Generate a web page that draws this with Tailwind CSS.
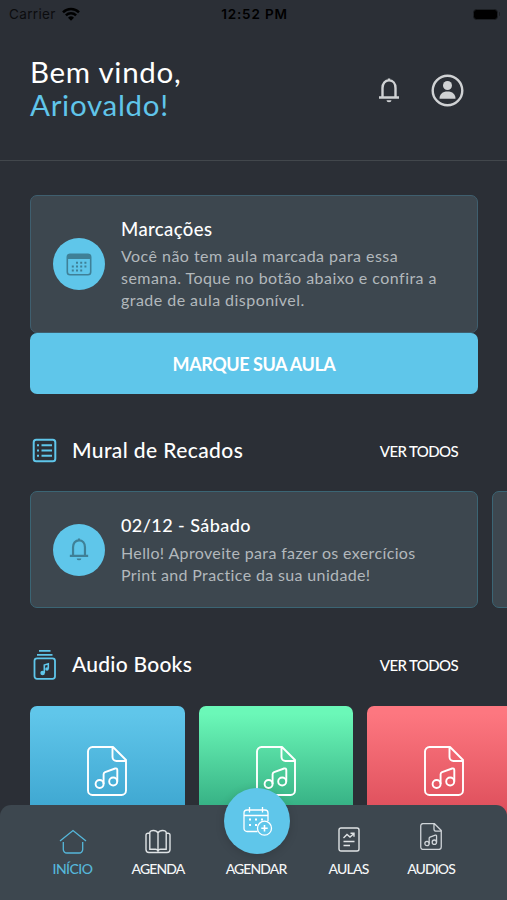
<!DOCTYPE html>
<html lang="pt-BR">
<head>
<meta charset="utf-8">
<title>Início</title>
<script src="https://cdn.jsdelivr.net/npm/@tailwindcss/browser@4"></script>
</head>
<body class="bg-[#2b2f36]">
<svg class="hidden">
  <symbol id="bell" viewBox="0 0 24 28"><path d="M5.500 20.300V11c0-4.600 2.600-7.600 6.500-7.600s6.500 3 6.500 7.600v9.300M2 20.500h20M12 1.500V4" fill="none" stroke="currentColor" stroke-width="2.400"/><path d="M9.500 23.200h5a2.500 2 0 0 1-5 0z" fill="currentColor"/></symbol>
  <symbol id="audiofile" viewBox="0 0 40 50"><g fill="none" stroke="currentColor" stroke-linejoin="round"><path d="M5.500 1H26L39 14v30.500a4.500 4.500 0 0 1-4.500 4.500h-29A4.500 4.500 0 0 1 1 44.500v-39A4.500 4.500 0 0 1 5.500 1zM25.500 1v10a4 4 0 0 0 4 4H39"/><circle cx="12.600" cy="38" r="4"/><circle cx="26.200" cy="35.500" r="4"/><path d="M16.600 38V28.300c0-1 .5-1.600 1.500-2.100l10-3.700c1.300-.4 2.200.2 2.200 1.500v11.500"/></g></symbol>
</svg>
<div class="relative flex h-[900px] w-[507px] flex-col overflow-hidden bg-[#2b2f36] font-['Lato','Noto_Sans',sans-serif] text-white">
  <div class="grid h-[28px] shrink-0 grid-cols-3 items-center pr-[7px] pl-[9px] font-['Inter',sans-serif] text-[13.500px] text-black">
    <div class="flex items-center gap-[6px]"><span class="tracking-[0.350px] text-[#0b0c0e]">Carrier</span>
      <svg class="h-[14px] w-[18px]" viewBox="0 0 18 14"><g fill="none" stroke="#000" stroke-width="2.500"><path d="M1 5.300a11.400 11.400 0 0 1 16 0M3.900 8.400a7.300 7.300 0 0 1 10.200 0"/></g><path d="M6 10.700a4.300 4.300 0 0 1 6 0L9 13.700z"/></svg></div>
    <div class="text-center font-semibold tracking-[0.850px] whitespace-nowrap">12:52 PM</div>
    <div class="flex items-center justify-end gap-[1px]"><span class="h-[11px] w-[25px] rounded-[3.500px] border border-[#1c1f23] bg-black"></span><span class="h-[4px] w-[1.500px] rounded-r bg-[#1c1f23]"></span></div>
  </div>
  <header class="flex h-[133px] shrink-0 items-start justify-between border-b border-[#42474c] pt-[27px] pr-[43px] pl-[30px]">
    <h1 class="text-[29.500px] leading-[33px] tracking-[0.720px]">Bem vindo,<br><span class="text-[#60c5ea]">Ariovaldo!</span></h1>
    <div class="flex items-center gap-[30px] pt-[19px] text-[#d0d2d4]">
      <svg class="h-[28px] w-[24px]"><use href="#bell"/></svg>
      <svg class="h-[33px] w-[33px]" viewBox="0 0 33 33"><circle cx="16.500" cy="16.500" r="14.800" fill="none" stroke="currentColor" stroke-width="2.400"/><circle cx="16.500" cy="11.500" r="4.500" fill="currentColor"/><path d="M8.500 24.800c0-4.600 3-7.200 8-7.200s8 2.600 8 7.200z" fill="currentColor"/></svg>
    </div>
  </header>
  <main class="flex flex-col">
    <section class="mx-[30px] mt-[34px] flex w-[448px] flex-col">
      <div class="flex h-[138px] items-center rounded-[7px] border border-[#3f5f6f] bg-[#3d474f] pl-[22px]">
        <div class="flex size-[52px] shrink-0 items-center justify-center rounded-full bg-[#5fc6ea] text-[#3f8097]">
          <svg class="h-[23px] w-[26px]" viewBox="0 0 26 23"><rect x="1.300" y="1.300" width="23.400" height="20.400" rx="2.800" fill="none" stroke="currentColor" stroke-width="1.600"/><path d="M1 6V4a3 3 0 0 1 3-3h18a3 3 0 0 1 3 3v2z" fill="currentColor"/><path d="M10 9.700h10.400M5.800 13.600h14.600M5.800 17.500h10.400" stroke="currentColor" stroke-width="2" stroke-dasharray="2 2.200"/></svg>
        </div>
        <div class="ml-[16px]">
          <h2 class="text-[18.500px] leading-[24px] font-medium tracking-[0.400px]">Marcações</h2>
          <p class="mt-[4px] text-[16px] leading-[22px] tracking-[0.460px] whitespace-nowrap text-[#b2b8bc]">Você não tem aula marcada para essa<br>semana. Toque no botão abaixo e confira a<br>grade de aula disponível.</p>
        </div>
      </div>
      <button class="h-[61px] rounded-[7px] bg-[#5fc6ea] pt-px text-[18px] font-bold tracking-[-0.450px]">MARQUE SUA AULA</button>
    </section>
    <div class="mt-[36px] flex h-[40px] items-center pr-[49px] pl-[32px]">
      <svg class="h-[25px] w-[25px] text-[#5fc6ea]" viewBox="0 0 25 25"><rect x="1.700" y="1.700" width="21.600" height="21.600" rx="2.500" fill="none" stroke="currentColor" stroke-width="2"/><path d="M5 7.300h2M5 12.500h2M5 17.700h2M9.500 7.300H20M9.500 12.500H20M9.500 17.700H20" stroke="currentColor" stroke-width="2"/></svg>
      <h2 class="-mt-px ml-[15px] text-[21px] font-medium tracking-[0.400px]">Mural de Recados</h2>
      <a class="mt-[2px] ml-auto text-[15px] font-medium tracking-[-0.620px]">VER TODOS</a>
    </div>
    <div class="mt-[21px] ml-[30px] flex gap-[14px]">
      <article class="flex h-[117px] w-[448px] shrink-0 items-center rounded-[7px] border border-[#3b6574] bg-[#3d474f] pl-[22px]">
        <div class="flex size-[52px] shrink-0 items-center justify-center rounded-full bg-[#5fc6ea] text-[#3f8097]"><svg class="mt-px h-[26px] w-[22px]"><use href="#bell"/></svg></div>
        <div class="ml-[16px]">
          <h3 class="-mt-px text-[18px] leading-[24px] font-medium tracking-[0.430px]">02/12 - Sábado</h3>
          <p class="mt-[5px] text-[16px] leading-[22px] tracking-[0.360px] whitespace-nowrap text-[#b2b8bc]">Hello! Aproveite para fazer os exercícios<br>Print and Practice da sua unidade!</p>
        </div>
      </article>
      <article class="h-[117px] w-[448px] shrink-0 rounded-[7px] border border-[#3b6574] bg-[#3d474f]"></article>
    </div>
    <div class="mt-[36px] flex h-[40px] items-center pr-[49px] pl-[32px]">
      <svg class="h-[31px] w-[25px] text-[#5fc6ea]" viewBox="0 0 25 31"><path d="M7 1.800h11.500M5 5.800h15.500" stroke="currentColor" stroke-width="1.800"/><rect x="2.500" y="9.300" width="20.500" height="20.500" rx="2.500" fill="none" stroke="currentColor" stroke-width="1.800"/><circle cx="10.600" cy="24" r="2.300" fill="currentColor"/><circle cx="15" cy="20" r="1.800" fill="currentColor"/><path d="M12.300 24v-8l4-1.200v5" fill="none" stroke="currentColor" stroke-width="1.600"/></svg>
      <h2 class="-mt-px ml-[15px] text-[21px] font-medium tracking-[0.250px]">Audio Books</h2>
      <a class="mt-[2px] ml-auto text-[15px] font-medium tracking-[-0.620px]">VER TODOS</a>
    </div>
    <div class="mt-[22px] ml-[30px] flex gap-[14px]">
      <div class="flex h-[154px] w-[154.500px] shrink-0 justify-center rounded-[7px] bg-linear-to-b from-[#60c6ea] from-[5%] to-[#2a97c4] pt-[40px]"><svg class="h-[50px] w-[40px]" stroke-width="1.900"><use href="#audiofile"/></svg></div>
      <div class="flex h-[154px] w-[154.500px] shrink-0 justify-center rounded-[7px] bg-linear-to-b from-[#6bf8b8] from-[5%] to-[#128b69] pt-[40px]"><svg class="h-[50px] w-[40px]" stroke-width="1.900"><use href="#audiofile"/></svg></div>
      <div class="flex h-[154px] w-[154.500px] shrink-0 justify-center rounded-[7px] bg-linear-to-b from-[#fd7780] from-[5%] to-[#cf3a4b] pt-[40px]"><svg class="h-[50px] w-[40px]" stroke-width="1.900"><use href="#audiofile"/></svg></div>
    </div>
  </main>
  <nav class="absolute inset-x-0 bottom-0 flex h-[95px] rounded-t-[11px] bg-[#3d474f] pl-[30px] text-[14px] leading-[18px] font-medium tracking-[-0.900px] text-[#f4f6f7]">
    <a class="flex w-[85px] flex-col items-center tracking-[-0.550px] text-[#56b7da]"><span class="flex h-[55px] items-end pb-[6px]"><svg class="h-[25px] w-[28px]" viewBox="0 0 28 25" fill="none" stroke="currentColor" stroke-width="1.300"><path d="M1 12 14 1.500 27 12M4.300 13v7.500a3.500 3.500 0 0 0 3.500 3.500h12.400a3.500 3.500 0 0 0 3.500-3.500V13"/></svg></span>INÍCIO</a>
    <a class="flex w-[86px] flex-col items-center"><span class="flex h-[55px] items-end pb-[6px]"><svg class="h-[25px] w-[26px] text-[#dfe3e5]" viewBox="0 0 26 25" fill="none" stroke="currentColor" stroke-width="1.400"><path d="M13 4c-1-1.800-2.500-2.500-4.500-2.500S5 2.200 4.800 3.500v16.700h5.700c1.200 0 2 .6 2.500 1.800.5-1.200 1.300-1.800 2.500-1.800h5.700V3.500C21 2.200 19.500 1.500 17.500 1.500S14 2.200 13 4zM13 4v18M4.800 4C2 4 1 4.500 1 6v14.500C1 22.500 2 23.500 4 23.500h18c2 0 3-1 3-3V6c0-1.500-1-2-3.800-2"/></svg></span>AGENDA</a>
    <a class="flex w-[110px] flex-col items-center pt-[55px]">AGENDAR</a>
    <a class="flex w-[75px] flex-col items-center tracking-[-0.800px]"><span class="flex h-[55px] items-end pb-[8px]"><svg class="h-[25px] w-[22px] text-[#dfe3e5]" viewBox="0 0 22 25" fill="none" stroke="currentColor" stroke-width="1.400"><rect x="1" y="1" width="20" height="23" rx="2"/><path d="M5.500 11 9 7.500l3 2.500 4-3.500M12.500 6.200H16v3.500M5.500 14.500h11M5.500 18.500h6.500"/></svg></span>AULAS</a>
    <a class="flex w-[90px] flex-col items-center"><span class="flex h-[55px] items-end pb-[10px]"><svg class="h-[27px] w-[22px] text-[#cfd4d8]" stroke-width="2.400"><use href="#audiofile"/></svg></span>AUDIOS</a>
  </nav>
  <div class="absolute top-[788px] left-[224px] flex size-[66px] items-center justify-center rounded-full bg-[#5fc6ea] pl-[2px] shadow-[0_2px_10px_rgba(0,0,0,0.150)]">
    <svg class="h-[31px] w-[30px]" viewBox="0 0 30 31" fill="none" stroke="#fff" stroke-width="1.300"><path d="M14.500 25.500H4a3 3 0 0 1-3-3V7a3 3 0 0 1 3-3h18a3 3 0 0 1 3 3v8M1 9.500h24M6.500 1v5.500M19.500 1v5.500"/><path d="M6 13.500h2M12 13.500h2M18 13.500h2M6 19h2M12 19h2" stroke-width="2"/><circle cx="21.500" cy="22.200" r="7"/><path d="M21.500 19v6.400M18.300 22.200h6.400" stroke-width="1.600"/></svg>
  </div>
</div>
</body>
</html>
